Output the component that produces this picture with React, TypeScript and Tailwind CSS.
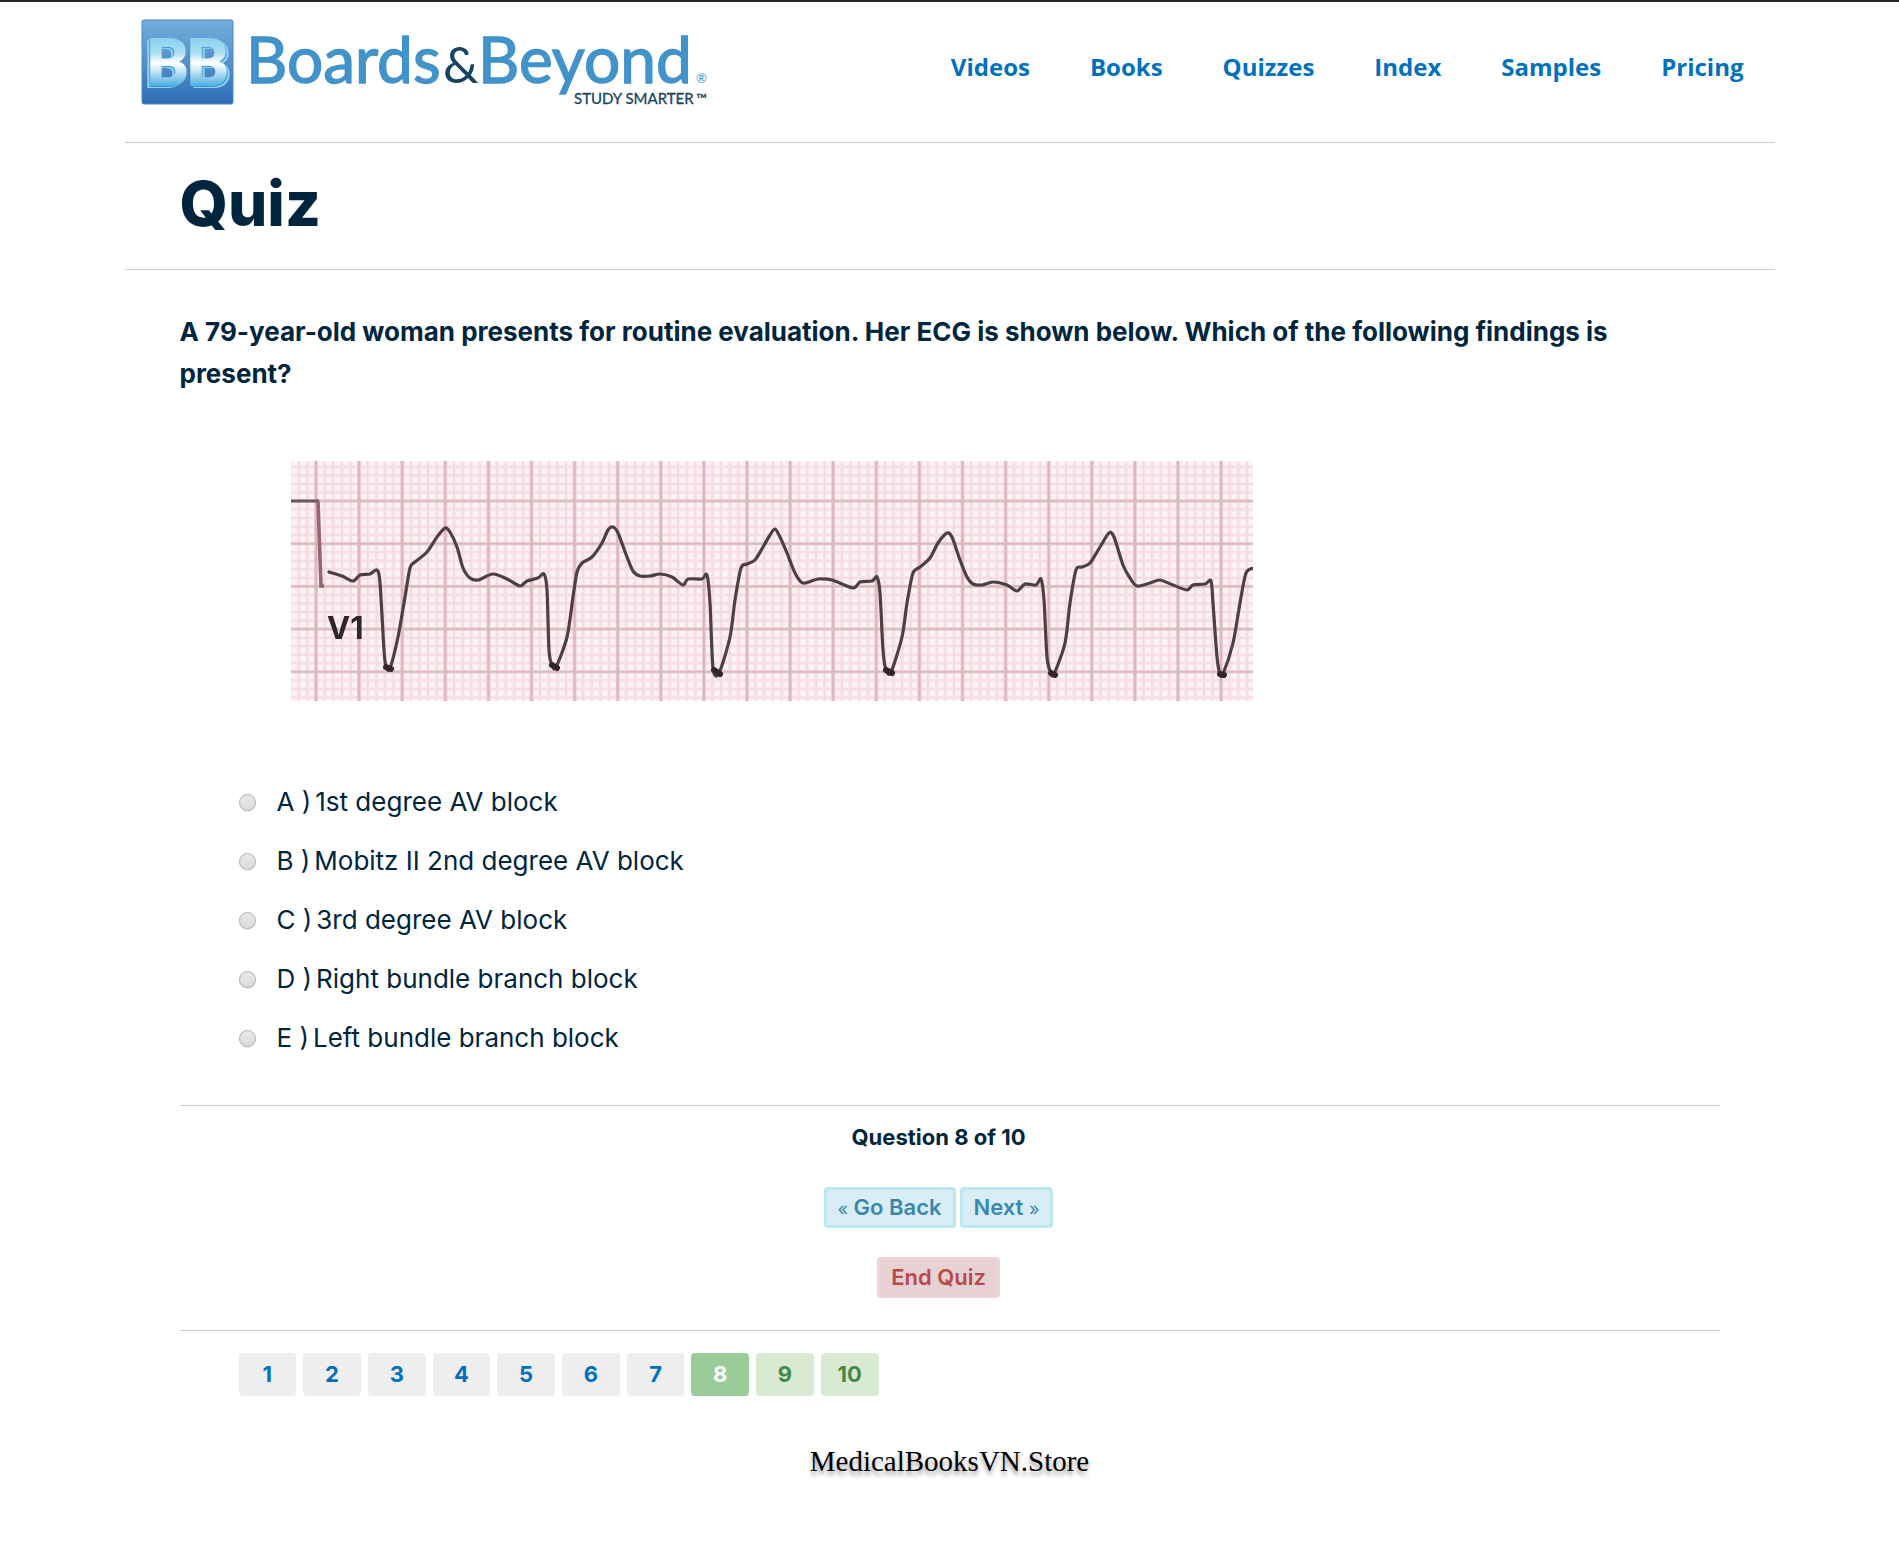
import { useState } from "react";

const NAV = ["Videos", "Books", "Quizzes", "Index", "Samples", "Pricing"];

const ANSWERS = [
  { key: "A", text: "1st degree AV block" },
  { key: "B", text: "Mobitz II 2nd degree AV block" },
  { key: "C", text: "3rd degree AV block" },
  { key: "D", text: "Right bundle branch block" },
  { key: "E", text: "Left bundle branch block" },
];

type Point = [number, number];

const TRACE: Point[] = [
  [38, 111], [51, 115], [62, 120], [69, 114], [79, 113], [86, 109], [89, 122], [93, 189], [95, 206], [99, 207],
  [107, 176], [114, 136], [119, 107], [124, 101], [136, 91], [146, 76], [154, 67], [159, 71], [166, 86], [172, 107],
  [179, 117], [187, 119], [202, 113], [216, 118], [229, 125], [236, 120], [247, 117], [253, 113], [256, 129],
  [258, 189], [261, 204], [265, 206], [276, 176], [282, 136], [286, 111], [291, 102], [301, 96], [311, 82],
  [317, 69], [322, 66], [327, 72], [336, 96], [342, 110], [349, 115], [359, 115], [369, 113], [381, 116],
  [392, 124], [397, 118], [411, 118], [416, 114], [419, 142], [422, 207], [428, 212], [439, 176], [444, 139],
  [450, 107], [456, 103], [464, 99], [472, 86], [479, 74], [484, 68], [489, 76], [496, 92], [504, 112],
  [512, 122], [527, 118], [541, 119], [562, 127], [569, 121], [581, 120], [586, 116], [589, 132], [592, 189],
  [595, 209], [600, 211], [611, 176], [616, 142], [622, 112], [629, 106], [639, 97], [647, 82], [656, 72],
  [661, 76], [669, 99], [676, 116], [682, 123], [691, 124], [702, 121], [716, 124], [726, 130], [734, 123],
  [745, 124], [750, 118], [753, 139], [756, 196], [760, 212], [763, 213], [774, 182], [779, 142], [785, 109],
  [791, 106], [799, 102], [809, 86], [818, 72], [823, 76], [832, 104], [839, 117], [846, 125], [859, 122],
  [869, 119], [882, 124], [896, 129], [902, 124], [914, 123], [920, 120], [922, 142], [926, 196], [929, 213],
  [932, 213], [942, 182], [949, 142], [955, 112], [963, 107],
];

// Bottoms of the S waves, where the pen lingers and the ink is thicker.
const DIPS = [
  "M95 206L100 208", "M261 204L266 207", "M423 209L429 213", "M595 209L601 212", "M760 212L764 214", "M929 213L933 214",
];

// Catmull-Rom curve through the points, with a light tension.
function smooth(points: Point[]): string {
  let d = `M${points[0][0]} ${points[0][1]}`;
  for (let i = 0; i < points.length - 1; i++) {
    const p0 = points[Math.max(i - 1, 0)];
    const p1 = points[i];
    const p2 = points[i + 1];
    const p3 = points[Math.min(i + 2, points.length - 1)];
    const c1 = [p1[0] + (p2[0] - p0[0]) / 7, p1[1] + (p2[1] - p0[1]) / 7];
    const c2 = [p2[0] - (p3[0] - p1[0]) / 7, p2[1] - (p3[1] - p1[1]) / 7];
    d += `C${c1[0]} ${c1[1]} ${c2[0]} ${c2[1]} ${p2[0]} ${p2[1]}`;
  }
  return d;
}

function Logo() {
  return (
    <svg viewBox="0 0 568 90" className="block w-[568px] h-[90px]" role="img" aria-label="Boards and Beyond, Study Smarter">
      <defs>
        <linearGradient id="tile" x1="0" y1="0" x2="0" y2="1">
          <stop offset="0" stopColor="#74addd" />
          <stop offset="0.5" stopColor="#5590cb" />
          <stop offset="1" stopColor="#2c6cb4" />
        </linearGradient>
        <linearGradient id="face" gradientUnits="userSpaceOnUse" x1="0" y1="18" x2="0" y2="72">
          <stop offset="0" stopColor="#86d0ee" />
          <stop offset="0.3" stopColor="#a9dff3" />
          <stop offset="0.5" stopColor="#ffffff" />
          <stop offset="0.62" stopColor="#d3ecf8" />
          <stop offset="1" stopColor="#2b9fdb" />
        </linearGradient>
        <filter id="extrudeLeft" x="-20%" y="-20%" width="140%" height="140%">
          <feDropShadow dx="-1" dy="1" stdDeviation="0" floodColor="#2e9ad6" />
          <feDropShadow dx="-2" dy="1" stdDeviation="0" floodColor="#8fd4f2" />
        </filter>
        <filter id="extrudeRight" x="-20%" y="-20%" width="140%" height="140%">
          <feDropShadow dx="1" dy="1" stdDeviation="0" floodColor="#2e9ad6" />
          <feDropShadow dx="2" dy="1" stdDeviation="0" floodColor="#8fd4f2" />
        </filter>
      </defs>
      <rect x="1" y="2" width="91" height="84" rx="2" fill="url(#tile)" stroke="#4a87c4" strokeWidth="1" />
      <g
        fontFamily='"Liberation Sans Narrow", Roboto, sans-serif'
        fontWeight="900"
        fontSize="66"
        textAnchor="middle"
        fill="url(#face)"
      >
        <text x="27" y="68" filter="url(#extrudeLeft)">B</text>
        <text x="67" y="68" filter="url(#extrudeRight)">B</text>
      </g>
      <g fontFamily="Lato, sans-serif" fill="#4193c9">
        <g fontSize="64" stroke="#4193c9" strokeWidth="1.4">
          <text x="105" y="65">Boards</text>
          <text x="337" y="65">Beyond</text>
        </g>
        <text x="302" y="65" fontSize="50" fill="#174360">&amp;</text>
        <text x="555" y="65" fontSize="13">®</text>
        <g fill="#174360" stroke="#174360" strokeWidth="0.3">
          <text x="433" y="86" fontSize="15">STUDY SMARTER</text>
          <text x="555" y="86" fontSize="14">™</text>
        </g>
      </g>
    </svg>
  );
}

function EcgStrip() {
  return (
    <svg viewBox="0 0 962 240" className="block w-full h-auto" role="img" aria-label="ECG strip, lead V1">
      <defs>
        <pattern id="minor" x="25" y="40" width="8.62" height="8.54" patternUnits="userSpaceOnUse">
          <rect width="8.62" height="8.54" fill="#fdf2f5" />
          <path d="M0 0H8.62M0 0V8.54M8.62 0V8.54M0 8.54H8.62" stroke="#f5dbe2" strokeWidth="2.6" />
        </pattern>
        <pattern id="major" x="3.45" y="18.65" width="43.1" height="42.7" patternUnits="userSpaceOnUse">
          <path d="M21.55 0V42.7" stroke="#dfb5be" strokeWidth="3" />
          <path d="M0 21.35H43.1" stroke="#d9b9be" strokeWidth="2.4" />
        </pattern>
        <filter id="soft" x="0" y="0" width="1" height="1">
          <feGaussianBlur stdDeviation="0.6" />
        </filter>
        <clipPath id="paper">
          <rect width="962" height="240" />
        </clipPath>
      </defs>
      <g clipPath="url(#paper)">
        <rect width="962" height="240" fill="#fbe8ed" />
        <g filter="url(#soft)">
          <rect x="-6" y="-6" width="974" height="252" fill="url(#minor)" />
          <rect x="-6" y="-6" width="974" height="252" fill="url(#major)" />
          <path d="M-2 40H28" fill="none" stroke="#6d565b" strokeWidth="3" />
          <path d="M27 40L30 125H33" fill="none" stroke="#93666f" strokeWidth="3.6" />
          <path d={smooth(TRACE)} fill="none" stroke="#4d4043" strokeWidth="3.2" strokeLinejoin="round" strokeLinecap="round" />
          {DIPS.map((d) => (
            <path key={d} d={d} stroke="#33282b" strokeWidth="6" strokeLinecap="round" />
          ))}
          <text x="36" y="178" fontFamily="Inter, sans-serif" fontSize="31" fontWeight="700" fill="#2f2529">V1</text>
        </g>
      </g>
    </svg>
  );
}

function pageClass(n: number, current: number) {
  if (n === current) return "bg-[#99cc99] text-white";
  if (n > 8) return "bg-[#d9ead3] text-[#468847]";
  return "bg-[#eeeeee] text-[#0071bc]";
}

export default function App() {
  const [answer, setAnswer] = useState("");
  return (
    <div className="min-h-screen border-t-2 border-[#2b2829] bg-white font-['Inter',sans-serif] text-[#00263e]">
      <div className="mx-auto max-w-[1650px]">
        <header className="flex h-[141px] items-start justify-between border-b border-[#cccccc] pl-4 pr-[31px] pt-4">
          <a href="#home">
            <Logo />
          </a>
          <nav className="flex gap-[60px] pt-[33px] font-['Open_Sans',sans-serif] text-2xl leading-8 font-bold text-[#0071bc]">
            {NAV.map((item) => (
              <a key={item} href={`#${item.toLowerCase()}`}>{item}</a>
            ))}
          </nav>
        </header>

        <div className="border-b border-[#cccccc] px-[55px] pt-[25px] pb-[29px]">
          <h1 className="text-[62px] leading-[72px] font-extrabold">Quiz</h1>
        </div>

        <main className="px-[55px]">
          <form onSubmit={(e) => e.preventDefault()}>
            <fieldset>
              <legend className="max-w-[1460px] pt-[41px] text-[26px] leading-[42px] font-bold">
                A 79-year-old woman presents for routine evaluation. Her ECG is shown below. Which of the following findings is present?
              </legend>
              <div className="ml-[111px] mt-[66px] max-w-[962px]">
                <EcgStrip />
              </div>
              <div className="ml-[59px] mt-[72px]">
                {ANSWERS.map(({ key, text }) => (
                  <label key={key} className="flex h-[59px] items-center text-[26px] leading-8 font-normal">
                    <input
                      type="radio"
                      name="answer"
                      value={key}
                      checked={answer === key}
                      onChange={() => setAnswer(key)}
                      className="mr-[21px] size-[17px] appearance-none rounded-full border border-[#b0b0b0] bg-linear-to-b from-[#e8e8e8] to-[#dcdcdc] shadow-[0_1px_1px_rgba(0,0,0,0.12)] checked:border-[#0071bc] checked:bg-[#0071bc]"
                    />
                    <span className="flex gap-1 pb-0.5">
                      <span>{key} )</span>
                      <span>{text}</span>
                    </span>
                  </label>
                ))}
              </div>
            </fieldset>

            <div className="mt-[37px] flex flex-col items-center border-y border-[#cccccc] pt-[15px] pb-8 pr-[22px]">
              <p className="text-[22px] leading-8 font-bold">Question 8 of 10</p>
              <div className="mt-[34px] flex gap-1">
                <button type="button" className="h-[41px] rounded border-3 border-[#bce8f1] bg-[#d9edf7] px-[11px] pb-0.5 text-[22px] leading-8 font-semibold text-[#3a87ad]">
                  <span className="text-lg font-normal">«</span> Go Back
                </button>
                <button type="button" className="h-[41px] rounded border-3 border-[#bce8f1] bg-[#d9edf7] px-[11px] pb-0.5 text-[22px] leading-8 font-semibold text-[#3a87ad]">
                  Next <span className="text-lg font-normal">»</span>
                </button>
              </div>
              <button type="button" className="mt-[29px] h-[41px] rounded border-3 border-[#eed3d7] bg-[#e6d1d3] px-[11px] pb-0.5 text-[22px] leading-8 font-semibold text-[#b94a48]">
                End Quiz
              </button>
            </div>
          </form>

          <nav aria-label="Questions" className="ml-[59px] mt-[22px] grid max-w-[640px] grid-cols-10 gap-[7px]">
            {Array.from({ length: 10 }, (_, i) => i + 1).map((n) => (
              <button key={n} type="button" className={`h-[43px] rounded pb-0.5 text-[22px] leading-8 font-bold ${pageClass(n, 8)}`}>
                {n}
              </button>
            ))}
          </nav>
        </main>

        <footer className="mt-[47px] pb-16 text-center font-['Palatino_Linotype','Book_Antiqua','Liberation_Serif',serif] text-[29px] leading-9 text-black [text-shadow:0_4px_4px_rgba(0,0,0,0.4)]">
          MedicalBooksVN.Store
        </footer>
      </div>
    </div>
  );
}
